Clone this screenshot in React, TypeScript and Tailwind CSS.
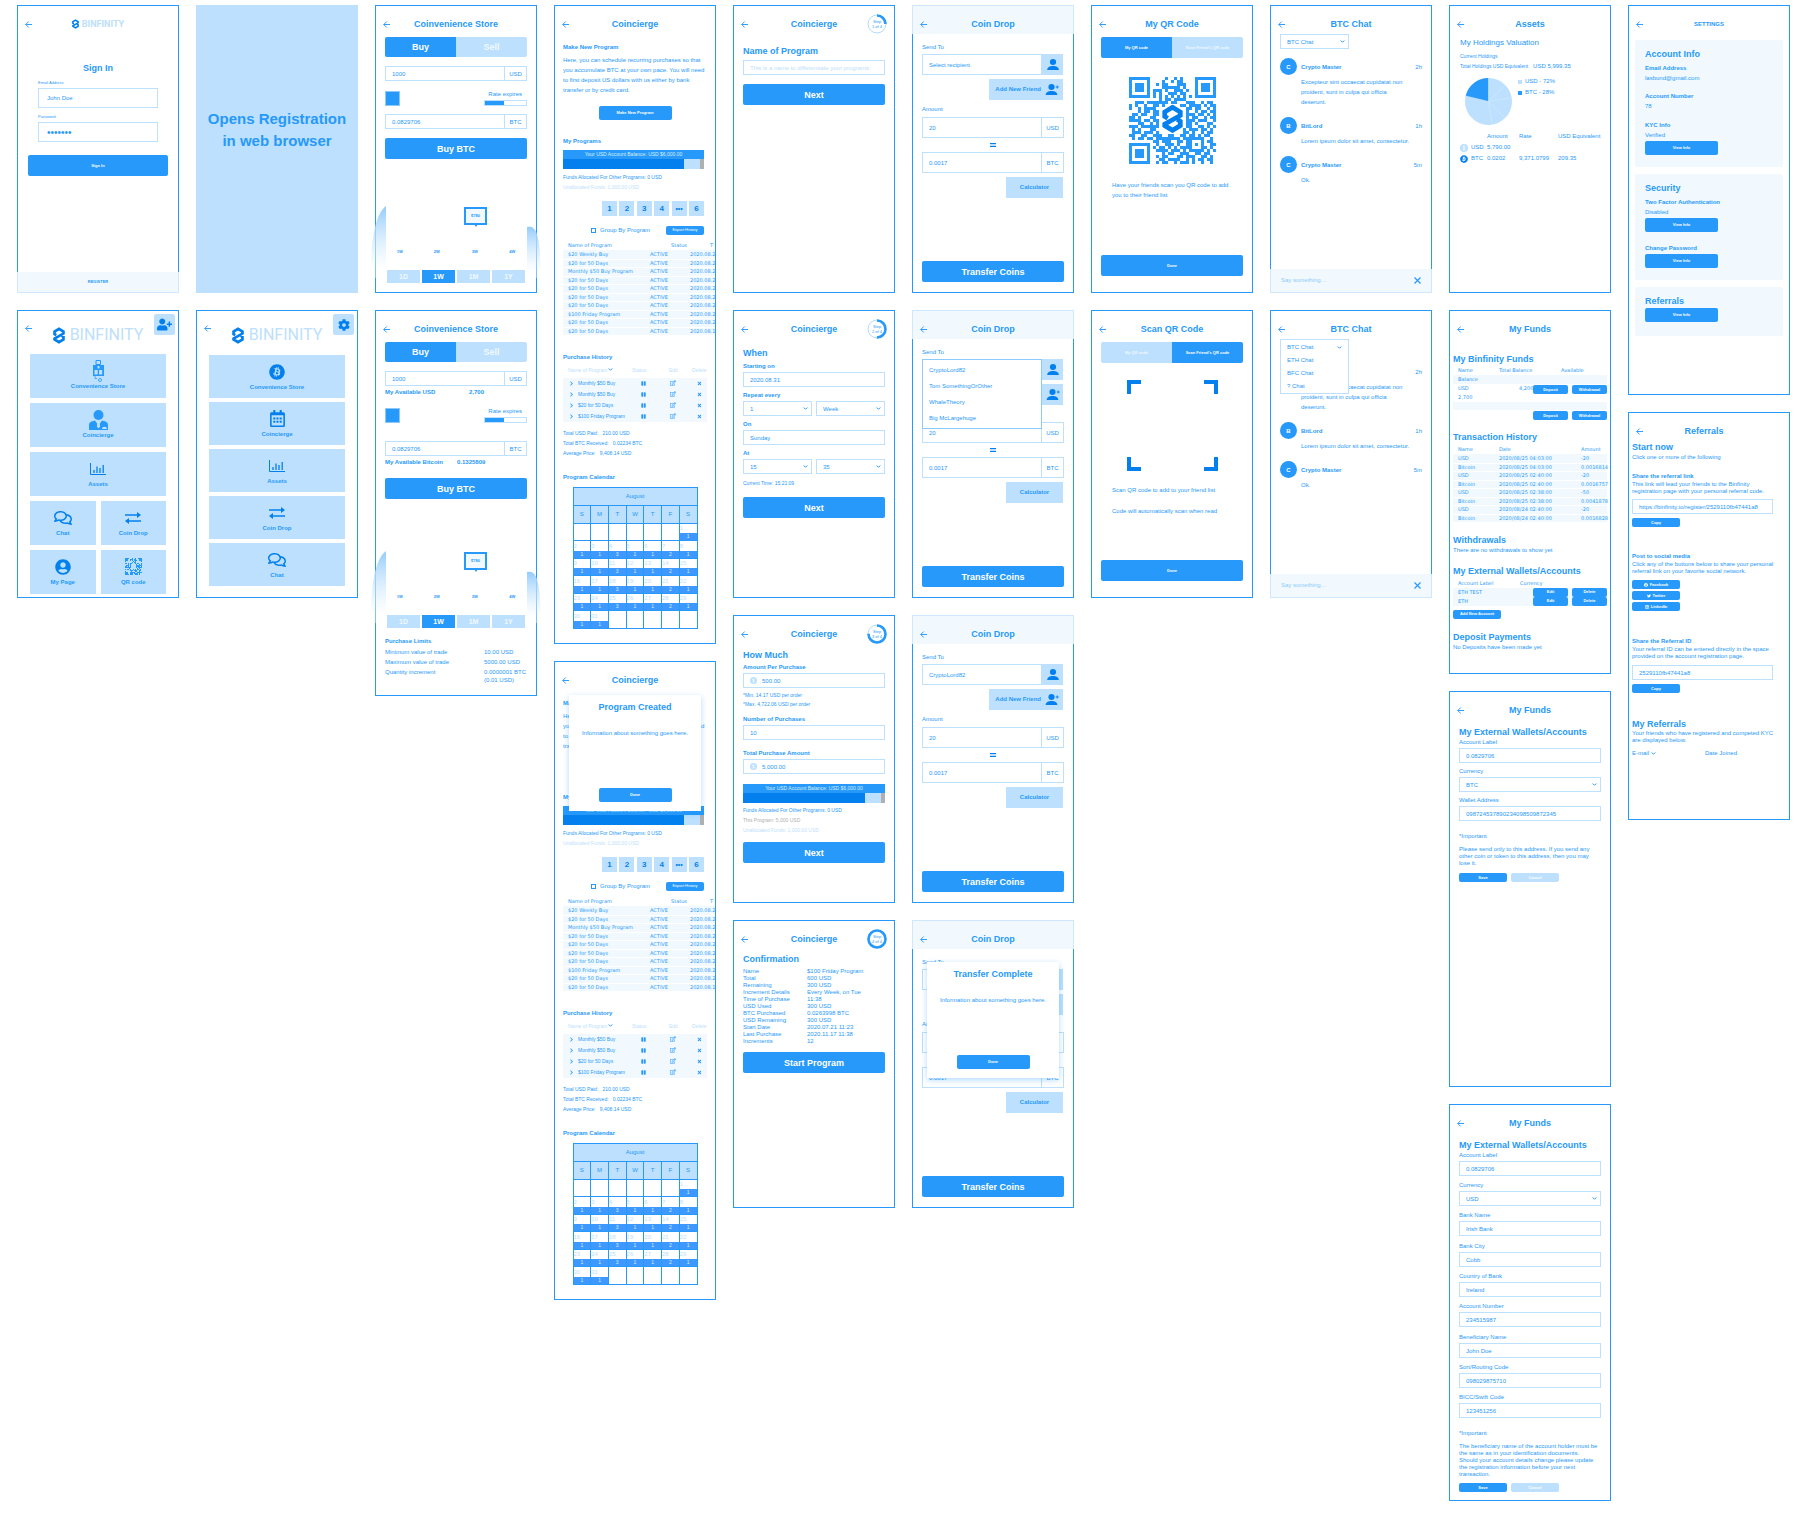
import React from "react";
import {
  FaBitcoin,
  FaChevronRight,
  FaCog,
  FaFacebook,
  FaLinkedin,
  FaPause,
  FaRegCalendarAlt,
  FaRegComments,
  FaRegEdit,
  FaTimes,
  FaTwitter,
  FaUserCircle,
  FaUserPlus,
} from "react-icons/fa";

type Kids = { children?: React.ReactNode; className?: string };

/* ---------- text ---------- */

const H = ({ children, className = "" }: Kids) => (
  <h2 className={`whitespace-nowrap text-[9px] font-bold leading-[10px] ${className}`}>{children}</h2>
);
const B = ({ children, className = "" }: Kids) => (
  <h3 className={`whitespace-nowrap text-[6px] font-bold leading-[8px] ${className}`}>{children}</h3>
);
const P = ({ children, className = "" }: Kids) => (
  <p className={`whitespace-nowrap text-[6px] leading-[8px] ${className}`}>{children}</p>
);
const Para = ({ children, className = "" }: Kids) => (
  <p className={`whitespace-pre text-[6px] leading-[7px] ${className}`}>{children}</p>
);
const S = ({ children, className = "" }: Kids) => (
  <p className={`whitespace-nowrap text-[5px] leading-[8px] ${className}`}>{children}</p>
);

/* ---------- controls ---------- */

const BigButton = ({ children, className = "" }: Kids) => (
  <button className={`h-[21px] w-full shrink-0 rounded-[2px] bg-[#2699fb] text-[9px] font-bold leading-[10px] text-white ${className}`}>
    {children}
  </button>
);
const SmallButton = ({ children, className = "" }: Kids) => (
  <button className={`block h-[14px] w-[73px] rounded-[2px] bg-[#2699fb] text-[4px] font-bold leading-[6px] text-white ${className}`}>
    {children}
  </button>
);
const TinyButton = ({ children, className = "" }: Kids) => (
  <button
    className={`flex h-[9px] items-center justify-center gap-[2px] whitespace-nowrap rounded-[2px] bg-[#2699fb] text-[4px] font-bold leading-[6px] text-white ${className}`}
  >
    {children}
  </button>
);

const Chevron = ({ className = "" }: { className?: string }) => (
  <svg viewBox="0 0 10 6" className={`h-[3px] w-[5px] shrink-0 ${className}`} fill="none" stroke="#2699fb" strokeWidth="2">
    <path d="M1.500 1L5 4.500 8.500 1" />
  </svg>
);

const Back = () => (
  <svg viewBox="0 0 14 14" className="size-[7px]" fill="none" stroke="#2699fb" strokeWidth="1.900">
    <path d="M14 7H1.500M7.500 1l-6 6 6 6" />
  </svg>
);

const fieldBox = "w-full min-w-0 border border-[#bce0fd] bg-white px-[6px] text-[6px] leading-[8px] text-[#2699fb] outline-none placeholder:text-[#bce0fd]";

type FieldProps = {
  label?: string;
  name?: string;
  value?: string;
  placeholder?: string;
  bold?: boolean;
  coin?: boolean;
  className?: string;
};

const Field = ({ label, name, value, placeholder, bold, coin, className = "" }: FieldProps) => (
  <label className={`block ${className}`}>
    {label && <span className={`mb-[2px] block whitespace-nowrap text-[6px] leading-[8px] ${bold ? "font-bold" : ""}`}>{label}</span>}
    <span className="relative flex">
      {coin && <Coin className="absolute left-[7px] top-[4px] size-[7px]" />}
      <input className={`${fieldBox} h-[15px] ${coin ? "pl-[18px]" : ""}`} defaultValue={value} placeholder={placeholder} aria-label={label ? undefined : name} />
    </span>
  </label>
);

const Select = ({ label, name, value, className = "" }: FieldProps) => (
  <label className={`block ${className}`}>
    {label && <span className="mb-[2px] block whitespace-nowrap text-[6px] leading-[8px]">{label}</span>}
    <span className="relative flex items-center">
      <select className={`${fieldBox} h-[15px] appearance-none`} aria-label={label ? undefined : name}>
        <option>{value}</option>
      </select>
      <Chevron className="absolute right-[4px]" />
    </span>
  </label>
);

const UnitField = ({ value, unit, tall }: { value: string; unit: string; tall?: boolean }) => (
  <div className={`flex ${tall ? "h-[21px]" : "h-[15px]"}`}>
    <input className={fieldBox} defaultValue={value} aria-label={`Amount in ${unit}`} />
    <span className="flex w-[22px] shrink-0 items-center justify-center border border-l-0 border-[#bce0fd] text-[6px] leading-[8px]">{unit}</span>
  </div>
);

/* ---------- drawings ---------- */

const Coin = ({ className = "" }: { className?: string }) => (
  <svg viewBox="0 0 16 16" className={className}>
    <circle cx="8" cy="8" r="8" fill="#bce0fd" />
    <path d="M10.500 5.600C10 4.700 9.200 4.300 8 4.300c-1.500 0-2.500.7-2.500 1.800 0 2.600 5.200 1.100 5.200 3.800 0 1.200-1.100 1.900-2.700 1.900-1.400 0-2.300-.5-2.800-1.500M8 2.800v10.400" fill="none" stroke="#fff" strokeWidth="1.100" />
  </svg>
);

const MARK_PATH = "M17 40.500L8 35V22L31 8l23 14v10L8 57.500V62l23 14 23-14V49l-9-5.500";

const Mark = ({ className = "" }: { className?: string }) => (
  <svg viewBox="0 0 62 84" className={className} fill="none" stroke="#0480ee" strokeWidth="14">
    <path d={MARK_PATH} />
  </svg>
);

const Logo = ({ large }: { large?: boolean }) => (
  <div className={`flex items-center justify-center ${large ? "gap-[5px]" : "gap-[3px]"}`}>
    <Mark className={large ? "h-[17px] w-[12px]" : "h-[10px] w-[7px]"} />
    <span className={`font-[Roboto,sans-serif] text-[#bce0fd] ${large ? "text-[16px] leading-[18px]" : "text-[9px] leading-[10px]"}`}>BINFINITY</span>
  </div>
);

const Bars = () => (
  <svg viewBox="0 0 16 12" className="h-[12px] w-[16px]" stroke="#0480ee" fill="none">
    <path d="M.5 0v11.500H16" />
    <path d="M4 10V7M7 10V3.500M10 10V5M13.200 10V2" strokeWidth="1.300" />
  </svg>
);

const Swap = () => (
  <svg viewBox="0 0 16 12" className="h-[12px] w-[16px]" fill="#0480ee">
    <path d="M0 2.200h12V0l4 3-4 3V3.800H0zM16 8.200H4V6L0 9l4 3V9.800h12z" />
  </svg>
);

const Register = () => (
  <svg viewBox="0 0 12 22" className="h-[22px] w-[12px]" fill="#2699fb">
    <path d="M4 .5h4.500v4H4z" fill="none" stroke="#2699fb" />
    <path d="M1 5h11v11H1z" />
    <path d="M2.500 10h3.200v4.500H2.500zM7 10h3.200v4.500H7zM5.500 6h2v2.500h-2z" fill="#bce0fd" />
    <path d="M3 16v2.500h2M6.500 20a1.500 1.500 0 103 0 1.500 1.500 0 10-3 0" fill="none" stroke="#2699fb" strokeWidth=".8" />
  </svg>
);

const Butler = () => (
  <svg viewBox="0 0 19 20" className="h-[20px] w-[19px]" fill="#2699fb">
    <circle cx="9.500" cy="5" r="5" />
    <path d="M0 20v-5c0-2.500 1.500-3.500 6-4.500l3.500 5 3.500-5c4.500 1 6 2 6 4.500v5z" />
    <path d="M8.500 11.500h2l.6 5-1.600 2-1.600-2zM13 19c0-3 5-3 5 0z" fill="#bce0fd" />
  </svg>
);

const Person = () => (
  <svg viewBox="0 0 12 11" className="h-[11px] w-[12px] shrink-0" fill="#0480ee">
    <ellipse cx="6" cy="3" rx="3.100" ry="3" />
    <path d="M.2 11c0-2.600 2.500-4 5.800-4s5.800 1.400 5.800 4z" />
  </svg>
);

const PersonAdd = () => (
  <svg viewBox="0 0 14 11" className="h-[11px] w-[14px] shrink-0" fill="#0480ee">
    <ellipse cx="6.500" cy="3" rx="3.100" ry="3" />
    <path d="M.7 11c0-2.600 2.500-4 5.800-4s5.800 1.400 5.800 4z" />
    <path d="M12.200 1.500v3M10.700 3h3" stroke="#0480ee" strokeWidth=".9" />
  </svg>
);

const Cross = () => (
  <svg viewBox="0 0 7 7" className="size-[7px]" stroke="#2699fb" strokeWidth="1.200">
    <path d="M.5.5l6 6M6.500.5l-6 6" />
  </svg>
);

const QR_ROWS = [
  "11111110000010010100001111111",
  "10000010000100101100001000001",
  "10111010010110001110001011101",
  "10111010000111111010001011101",
  "10111010111010011101001011101",
  "10000010101001110110001000001",
  "11111110101010101010101111111",
  "00000000001011011110000000000",
  "00111011111110110001110010110",
  "10100100110100000110111101011",
  "10010111100000000001101100101",
  "00010110110000000001001011011",
  "01101100110000000001110110101",
  "11010001100000000001011001011",
  "11110110110000000001110111001",
  "00011001010000000001101000110",
  "11101111110000000001100110101",
  "01010001100000000010111011010",
  "01110111010000000011010010110",
  "11001100111001100110110101100",
  "01011011011111111011111110010",
  "00000000110111001101100010110",
  "11111110010011101001101010011",
  "10000010101101010111100011010",
  "10111010011110111010111110101",
  "10111010000101100111001101100",
  "10111010010110001101110011010",
  "10000010001101111001010110110",
  "11111110010110010111010010010",
];

const Qr = ({ className = "", mark }: { className?: string; mark?: boolean }) => (
  <svg viewBox="0 0 29 29" className={className} shapeRendering="crispEdges">
    {QR_ROWS.map((row, y) =>
      row.split("").map((c, x) => (c === "1" ? <rect key={`${x}-${y}`} x={x} y={y} width="1" height="1" fill="#2699fb" /> : null)),
    )}
    {mark && (
      <svg x="11" y="9.200" width="7" height="9.500" viewBox="0 0 62 84" shapeRendering="auto" fill="none" stroke="#0480ee" strokeWidth="14">
        <path d={MARK_PATH} />
      </svg>
    )}
  </svg>
);

const StepRing = ({ step }: { step: number }) => {
  const length = 2 * Math.PI * 8.5;
  return (
    <div className="relative size-[20px]">
      <svg viewBox="0 0 20 20" className="absolute inset-0 size-[20px] -rotate-90" fill="none">
        <circle cx="10" cy="10" r="9" stroke="#7cc2fc" strokeWidth=".6" />
        <circle cx="10" cy="10" r="8.500" stroke="#2699fb" strokeWidth="2.600" strokeDasharray={`${(length * step) / 4} ${length}`} />
      </svg>
      <p className="relative pt-[5px] text-center text-[4px] leading-[5px]">
        Step
        <br />
        {step} of 4
      </p>
    </div>
  );
};

/* ---------- screens ---------- */

const Header = ({ title, right, tinted, small, className = "" }: { title: React.ReactNode; right?: React.ReactNode; tinted?: boolean; small?: boolean; className?: string }) => (
  <header
    className={`grid shrink-0 grid-cols-[20px_1fr_20px] items-center px-[7px] ${
      tinted ? "-mx-px -mt-px h-[29px] border border-b-0 border-[#cfe8fd] bg-[#f1f9ff] pt-[8px]" : "h-[28px] pt-[8px]"
    } ${className}`}
  >
    <button aria-label="Back">
      <Back />
    </button>
    <h1 className={`whitespace-nowrap text-center font-bold leading-[12px] ${small ? "text-[6px]" : "text-[9px]"}`}>{title}</h1>
    <div>{right}</div>
  </header>
);

const Card = ({ children, className = "min-h-[288px]" }: Kids) => (
  <section className={`relative flex w-full flex-col border border-[#2699fb] bg-white ${className}`}>{children}</section>
);
const Body = ({ children, className = "px-[9px]" }: Kids) => <div className={`flex grow flex-col ${className}`}>{children}</div>;

const SignIn = () => (
  <Card>
    <Header title={<Logo />} />
    <Body className="px-[20px]">
      <H className="mt-[29px] text-center">Sign In</H>
      <label className="mt-[7px] block">
        <span className="block text-[4px] leading-[6px]">Email Address</span>
        <input className={`${fieldBox} mt-[2px] block h-[20px] pl-[8px]`} defaultValue="John Doe" />
      </label>
      <label className="mt-[6px] block">
        <span className="block text-[4px] leading-[6px]">Password</span>
        <input
          type="password"
          className="mt-[2px] block h-[20px] w-full min-w-0 border border-[#bce0fd] bg-white pl-[8px] text-[10px] leading-[12px] text-[#2699fb] outline-none"
          defaultValue="1234567"
        />
      </label>
      <button className="-mx-[10px] mt-[13px] h-[21px] rounded-[2px] bg-[#2699fb] text-[4px] font-bold text-white">Sign In</button>
    </Body>
    <a href="#register" className="-mx-px -mb-px flex h-[21px] items-center justify-center border border-t-0 border-[#cfe8fd] bg-[#f1f9ff] text-[4px] font-bold">
      REGISTER
    </a>
  </Card>
);

const Registration = () => (
  <section className="flex min-h-[288px] w-full flex-col items-center bg-[#bce0fd] pt-[103px] text-center text-[15px] font-bold leading-[22px]">
    <p className="whitespace-nowrap">
      Opens Registration
      <br />
      in web browser
    </p>
  </section>
);

const Tile = ({ icon, label, className = "h-[44px]" }: { icon: React.ReactNode; label: string; className?: string }) => (
  <button className={`flex w-full flex-col items-center bg-[#bce0fd] text-[#0480ee] ${className}`}>
    <span className="mt-[5px] flex h-[23px] items-center justify-center">{icon}</span>
    <span className="whitespace-nowrap text-[6px] font-bold leading-[8px] text-[#2699fb]">{label}</span>
  </button>
);

const HomeTop = ({ icon, label }: { icon: React.ReactNode; label: string }) => (
  <div className="relative flex h-[43px] flex-col">
    <button aria-label="Back" className="absolute left-[7px] top-[14px]">
      <Back />
    </button>
    <div className="pt-[15px]">
      <Logo large />
    </div>
    <button aria-label={label} className="absolute right-[3px] top-[3px] flex size-[21px] items-center justify-center rounded-[2px] bg-[#bce0fd] text-[#0480ee]">
      {icon}
    </button>
  </div>
);

const HomeGrid = () => (
  <Card>
    <HomeTop icon={<FaUserPlus className="size-[15px]" />} label="Add friend" />
    <Body className="gap-[5px] px-[12px]">
      <Tile icon={<Register />} label="Convenience Store" />
      <Tile icon={<Butler />} label="Coincierge" />
      <Tile icon={<Bars />} label="Assets" />
      <div className="grid grid-cols-2 gap-[5px]">
        <Tile icon={<FaRegComments className="size-[18px]" />} label="Chat" />
        <Tile icon={<Swap />} label="Coin Drop" />
        <Tile icon={<FaUserCircle className="size-[16px]" />} label="My Page" />
        <Tile icon={<Qr className="size-[17px]" />} label="QR code" />
      </div>
    </Body>
  </Card>
);

const HomeList = () => (
  <Card>
    <HomeTop icon={<FaCog className="size-[12px]" />} label="Settings" />
    <Body className="gap-[4px] px-[12px] pt-px">
      <Tile className="h-[43px]" icon={<FaBitcoin className="size-[16px]" />} label="Convenience Store" />
      <Tile className="h-[43px]" icon={<FaRegCalendarAlt className="size-[17px]" />} label="Coincierge" />
      <Tile className="h-[43px]" icon={<Bars />} label="Assets" />
      <Tile className="h-[43px]" icon={<Swap />} label="Coin Drop" />
      <Tile className="h-[43px]" icon={<FaRegComments className="size-[18px]" />} label="Chat" />
    </Body>
  </Card>
);

const Store = ({ detailed }: { detailed?: boolean }) => (
  <Card className={detailed ? "min-h-[386px]" : "min-h-[288px]"}>
    <Header title="Coinvenience Store" />
    <Body>
      <div className="mt-[3px] flex h-[20px] text-[9px] font-bold leading-[10px]">
        <button className="flex-1 rounded-l-[2px] bg-[#2699fb] text-white">Buy</button>
        <button className="flex-1 rounded-r-[2px] bg-[#bce0fd] text-[#f1f9ff]">Sell</button>
      </div>
      <div className="mt-[9px]">
        <UnitField value="1000" unit="USD" />
      </div>
      {detailed && (
        <div className="mt-[2px] grid grid-cols-[84px_1fr]">
          <B>My Available USD</B>
          <B>2,700</B>
        </div>
      )}
      <div className={`flex items-end justify-between ${detailed ? "mt-[11px]" : "mt-[9px]"}`}>
        <span className="size-[15px] border border-[#8ccafc] bg-[#2699fb]" />
        <div className="w-[43px]">
          <P className="mb-[2px] mr-[5px] text-right">Rate expires</P>
          <div className="h-[6px] border border-[#bce0fd]">
            <div className="h-[4px] w-[19px] bg-[#2699fb]" />
          </div>
        </div>
      </div>
      <div className={detailed ? "mt-[18px]" : "mt-[8px]"}>
        <UnitField value="0.0829706" unit="BTC" />
      </div>
      {detailed && (
        <div className="mt-[2px] grid grid-cols-[72px_1fr]">
          <B>My Available Bitcoin</B>
          <B>0.1325809</B>
        </div>
      )}
      <BigButton className={detailed ? "mt-[12px]" : "mt-[9px]"}>Buy BTC</BigButton>
      <div className={`relative flex flex-col justify-end ${detailed ? "h-[116px]" : "h-[111px]"}`}>
        <svg viewBox="0 0 171 72" className="absolute bottom-[-8px] left-[-15px] h-[72px] w-[171px]" aria-hidden="true">
          <defs>
            <linearGradient id={detailed ? "fadeB" : "fadeA"} x1="0" y1="0" x2="0" y2="1">
              <stop offset="0" stopColor="#93ccfd" />
              <stop offset=".9" stopColor="#fff" stopOpacity=".4" />
            </linearGradient>
          </defs>
          <g fill={detailed ? "url(#fadeB)" : "url(#fadeA)"}>
            <path d="M16 0C5 8 1 34 0 72h16z" />
            <path d="M157 21c10-2 13 8 14 51h-14z" />
          </g>
        </svg>
        <div className="absolute bottom-[45px] left-[79px] flex h-[18px] w-[23px] items-center justify-center border-2 border-[#2699fb] bg-[#f1f9ff] text-[4px] font-bold">
          $780
          <svg viewBox="0 0 4 3" className="absolute bottom-[-4px] left-[8px] h-[3px] w-[4px]" fill="#2699fb">
            <path d="M0 0h4L2 3z" />
          </svg>
        </div>
        <div className="mb-[15px] grid grid-cols-4 text-center text-[4px] font-bold leading-[6px]">
          <span className="pr-[6px]">1W</span>
          <span className="pr-[3px]">2W</span>
          <span className="pl-[2px]">3W</span>
          <span className="pl-[6px]">4W</span>
        </div>
      </div>
      <div className="mx-[2px] grid grid-cols-4 gap-[2px] text-[7px] font-bold leading-[8px] text-[#f1f9ff]">
        <button className="h-[13px] bg-[#bce0fd]">1D</button>
        <button className="h-[13px] bg-[#2699fb] text-white">1W</button>
        <button className="h-[13px] bg-[#bce0fd]">1M</button>
        <button className="h-[13px] bg-[#bce0fd]">1Y</button>
      </div>
      {detailed && (
        <>
          <B className="mt-[9px]">Purchase Limits</B>
          <dl className="mt-[2px] grid grid-cols-[99px_1fr] whitespace-nowrap text-[6px] leading-[10px]">
            <dt>Minimum value of trade</dt>
            <dd>10.00 USD</dd>
            <dt>Maximum value of trade</dt>
            <dd>5000.00 USD</dd>
            <dt>Quantity increment</dt>
            <dd className="pt-px leading-[8px]">
              0.0000001 BTC
              <br />
              (0.01 USD)
            </dd>
          </dl>
        </>
      )}
    </Body>
  </Card>
);

const Balance = () => (
  <div>
    <p className="h-[9px] whitespace-nowrap bg-[#2699fb] text-center text-[5px] leading-[9px] text-[#d9eefe]">Your USD Account Balance: USD $6,000.00</p>
    <div className="flex h-[10px] bg-[#bce0fd]">
      <div className="w-[86%] bg-[#0480ee]" />
      <div className="ml-auto w-[4px] bg-[#b0b0b0]" />
    </div>
  </div>
);

const PROGRAMS = [
  ["$20 Weekly Buy", "2020.08.2"],
  ["$20 for 50 Days", "2020.08.2"],
  ["Monthly $50 Buy Program", "2020.08.2"],
  ["$20 for 50 Days", "2020.08.2"],
  ["$20 for 50 Days", "2020.08.2"],
  ["$20 for 50 Days", "2020.08.2"],
  ["$20 for 50 Days", "2020.08.2"],
  ["$100 Friday Program", "2020.08.2"],
  ["$20 for 50 Days", "2020.08.2"],
  ["$20 for 50 Days", "2020.08.1"],
];

const COUNTS = ["1", "1", "3", "1", "1", "2", "1"];

const Calendar = () => {
  const weeks = Array.from({ length: 6 }, (_, w) => Array.from({ length: 7 }, (_, d) => w * 7 + d - 5));
  return (
    <table className="mx-auto mt-[6px] h-[142px] w-[125px] table-fixed border-collapse border border-[#2699fb] text-center text-[6px] leading-[8px]">
      <thead>
        <tr>
          <th colSpan={7} className="h-[18px] border border-[#2699fb] bg-[#bce0fd] font-normal">
            August
          </th>
        </tr>
        <tr>
          {["S", "M", "T", "W", "T", "F", "S"].map((d, i) => (
            <th key={i} className="h-[18px] border border-[#2699fb] bg-[#bce0fd] font-normal">
              {d}
            </th>
          ))}
        </tr>
      </thead>
      <tbody>
        {weeks.map((week, w) => (
          <tr key={w}>
            {week.map((day, d) => (
              <td key={d} className="border border-[#2699fb] p-0 align-bottom">
                {day > 0 && day < 32 && (
                  <>
                    <span className="block text-left leading-[9px] text-[#bce0fd]">{day}</span>
                    <span className="block bg-[#3d98ff] text-[5px] leading-[7px] text-[#d9eefe]">{w === 0 ? "1" : COUNTS[d]}</span>
                  </>
                )}
              </td>
            ))}
          </tr>
        ))}
      </tbody>
    </table>
  );
};

const Modal = ({ title, className = "" }: { title: string; className?: string }) => (
  <div role="dialog" aria-label={title} className={`absolute inset-x-[14px] flex h-[116px] flex-col items-center bg-white shadow-[0_2px_6px_rgba(38,153,251,0.35)] ${className}`}>
    <H className="mt-[7px]">{title}</H>
    <P className="mt-[17px]">Information about something goes here.</P>
    <SmallButton className="mb-[9px] mt-auto">Done</SmallButton>
  </div>
);

const Programs = ({ modal }: { modal?: boolean }) => (
  <Card className="min-h-[639px] overflow-hidden">
    <Header title="Coincierge" />
    <Body className="px-[8px] pb-[12px]">
      <B className="mt-[9px]">Make New Program</B>
      <p className="mt-[4px] whitespace-pre text-[6px] leading-[10px]">
        {"Here, you can schedule recurring purchases so that\nyou accumulate BTC at your own pace. You will need\nto first deposit US dollars with us either by bank\ntransfer or by credit card."}
      </p>
      <SmallButton className="mx-auto mt-[11px]">Make New Program</SmallButton>
      <B className="mt-[17px]">My Programs</B>
      <div className="mr-[3px] mt-[5px]">
        <Balance />
        <p className="mt-[3px] whitespace-nowrap text-[5px] leading-[10px]">
          Funds Allocated For Other Programs: 0 USD
          <br />
          <span className="text-[#bce0fd]">Unallocated Funds: 1,000.00 USD</span>
        </p>
        <nav className="ml-auto mt-[9px] flex w-[102px] justify-between">
          {["1", "2", "3", "4", "•••", "6"].map((p) => (
            <button key={p} className={`size-[15px] bg-[#bce0fd] font-bold leading-[15px] text-[#0480ee] ${p === "•••" ? "text-[7px]" : "text-[8px]"}`}>
              {p}
            </button>
          ))}
        </nav>
        <div className="mt-[9px] flex h-[10px] items-center justify-end">
          <label className="flex items-center gap-[4px] whitespace-nowrap text-[6px] leading-[8px]">
            <input type="checkbox" className="size-[5px] appearance-none border border-[#2699fb]" />
            Group By Program
          </label>
          <TinyButton className="ml-[16px] w-[38px] font-normal">Export History</TinyButton>
        </div>
      </div>
      <table className="mr-[-9px] mt-[5px] table-fixed whitespace-nowrap text-left font-['DejaVu_Sans',sans-serif] text-[5px] leading-[7px]">
        <thead>
          <tr className="h-[10px]">
            <th className="w-[87px] p-0 pl-[5px] font-normal">Name of Program</th>
            <th className="w-[40px] p-0 pl-[21px] font-normal">Status</th>
            <th className="p-0 pl-[20px] font-normal">T</th>
          </tr>
        </thead>
        <tbody>
          {PROGRAMS.map(([name, date], i) => (
            <tr key={i} className="border-b border-white bg-[#f1f9ff] odd:h-[9px] even:h-[8px]">
              <td className="p-0 pl-[5px]">{name}</td>
              <td className="p-0">ACTIVE</td>
              <td className="p-0">{date}</td>
            </tr>
          ))}
        </tbody>
      </table>
      <B className="mt-[17px]">Purchase History</B>
      <table className="mt-[4px] w-full table-fixed whitespace-nowrap text-left text-[5px] leading-[8px]">
        <thead className="text-[#bce0fd]">
          <tr className="h-[13px] align-top">
            <th className="w-[69px] p-0 pl-[5px] pt-px font-normal">
              <span className="flex items-center gap-[1px]">
                Name of Program <Chevron />
              </span>
            </th>
            <th className="w-[37px] p-0 pt-px font-normal">Status</th>
            <th className="w-[23px] p-0 pt-px font-normal">Edit</th>
            <th className="p-0 pt-px font-normal">Delete</th>
          </tr>
        </thead>
        <tbody>
          {["Monthly $50 Buy", "Monthly $50 Buy", "$20 for 50 Days", "$100 Friday Program"].map((name, i) => (
            <tr key={i} className="h-[11px] bg-[#f1f9ff]">
              <td className="p-0 pl-[6px]">
                <span className="flex items-center gap-[4px]">
                  <FaChevronRight className="size-[5px]" />
                  {name}
                </span>
              </td>
              <td className="p-0 pl-[9px]">
                <button aria-label="Pause" className="block">
                  <FaPause className="size-[5px]" />
                </button>
              </td>
              <td className="p-0 pl-[1px]">
                <button aria-label="Edit" className="block">
                  <FaRegEdit className="size-[6px]" />
                </button>
              </td>
              <td className="p-0 pl-[5px]">
                <button aria-label="Delete" className="block">
                  <FaTimes className="size-[5px]" />
                </button>
              </td>
            </tr>
          ))}
        </tbody>
      </table>
      <p className="mt-[6px] whitespace-pre text-[5px] leading-[10px]">{"Total USD Paid:   210.00 USD\nTotal BTC Received:   0.02234 BTC\nAverage Price:   9,408.14 USD"}</p>
      <B className="mt-[15px]">Program Calendar</B>
      <Calendar />
    </Body>
    {modal && <Modal title="Program Created" className="top-[33px]" />}
  </Card>
);

const NameStep = () => (
  <Card>
    <Header title="Coincierge" right={<StepRing step={1} />} />
    <Body>
      <H className="mt-[12px]">Name of Program</H>
      <Field className="mt-[4px]" name="Name of Program" placeholder="This is a name to differentiate your programs." />
      <BigButton className="mt-[9px]">Next</BigButton>
    </Body>
  </Card>
);

const WhenStep = () => (
  <Card>
    <Header title="Coincierge" right={<StepRing step={2} />} />
    <Body>
      <H className="mt-[9px]">When</H>
      <Field bold className="mt-[4px]" label="Starting on" value="2020.08.31" />
      <B className="mt-[4px]">Repeat every</B>
      <div className="mt-[2px] grid grid-cols-2 gap-[4px]">
        <Select name="Repeat count" value="1" />
        <Select name="Repeat unit" value="Week" />
      </div>
      <Field bold className="mt-[4px]" label="On" value="Sunday" />
      <B className="mt-[4px]">At</B>
      <div className="mt-[2px] grid grid-cols-2 gap-[4px]">
        <Select name="Hour" value="15" />
        <Select name="Minute" value="35" />
      </div>
      <S className="mt-[5px]">Current Time: 15:21:09</S>
      <BigButton className="mt-[10px]">Next</BigButton>
    </Body>
  </Card>
);

const HowMuchStep = () => (
  <Card>
    <Header title="Coincierge" right={<StepRing step={3} />} />
    <Body>
      <H className="mt-[6px]">How Much</H>
      <Field bold coin className="mt-[3px]" label="Amount Per Purchase" value="500.00" />
      <p className="mt-[3px] whitespace-nowrap text-[5px] leading-[9px]">
        *Min. 14.17 USD per order
        <br />
        *Max. 4,722.06 USD per order
      </p>
      <Field bold className="mt-[6px]" label="Number of Purchases" value="10" />
      <Field bold coin className="mb-[10px] mt-[9px]" label="Total Purchase Amount" value="5,000.00" />
      <Balance />
      <p className="mt-[2px] whitespace-nowrap text-[5px] leading-[10px]">
        Funds Allocated For Other Programs: 0 USD
        <br />
        <span className="text-[#b0b0b0]">This Program: 5,000 USD</span>
        <br />
        <span className="text-[#bce0fd]">Unallocated Funds: 1,000.00 USD</span>
      </p>
      <BigButton className="mt-[7px]">Next</BigButton>
    </Body>
  </Card>
);

const CONFIRM = [
  ["Name", "$100 Friday Program"],
  ["Total", "600 USD"],
  ["Remaining", "300 USD"],
  ["Increment Details", "Every Week, on Tue"],
  ["Time of Purchase", "11:38"],
  ["USD Used", "300 USD"],
  ["BTC Purchased", "0.0263998 BTC"],
  ["USD Remaining", "300 USD"],
  ["Start Date", "2020.07.21 11:23"],
  ["Last Purchase", "2020.11.17 11:38"],
  ["Increments", "12"],
];

const ConfirmStep = () => (
  <Card>
    <Header title="Coincierge" right={<StepRing step={4} />} />
    <Body>
      <H className="mt-[5px]">Confirmation</H>
      <dl className="mt-[4px] grid grid-cols-[64px_1fr] whitespace-nowrap text-[6px] leading-[7px]">
        {CONFIRM.map(([k, v]) => (
          <React.Fragment key={k}>
            <dt>{k}</dt>
            <dd>{v}</dd>
          </React.Fragment>
        ))}
      </dl>
      <BigButton className="mt-[7px]">Start Program</BigButton>
    </Body>
  </Card>
);

const CoinDrop = ({ recipient, list, modal }: { recipient: string; list?: boolean; modal?: boolean }) => (
  <Card>
    <Header tinted title="Coin Drop" />
    <Body className="px-[9px] pb-[10px]">
      <label className="mt-[9px] block">
        <span className="block text-[6px] leading-[8px]">Send To</span>
        <span className="mr-px mt-[3px] flex h-[21px]">
          <input className={fieldBox} defaultValue={recipient} />
          <span className="flex w-[21px] shrink-0 items-center justify-center bg-[#bce0fd]">
            <Person />
          </span>
        </span>
      </label>
      {list ? (
        <button aria-label="Add New Friend" className="ml-auto mr-px mt-[4px] flex h-[21px] w-[21px] items-center justify-center bg-[#bce0fd]">
          <PersonAdd />
        </button>
      ) : (
        <button className="ml-auto mr-px mt-[4px] flex h-[21px] w-[74px] items-center justify-end gap-[4px] bg-[#bce0fd] pr-[4px] text-[6px] font-bold">
          <span className="whitespace-nowrap">Add New Friend</span>
          <PersonAdd />
        </button>
      )}
      <P className="mb-[4px] mt-[5px]">Amount</P>
      <UnitField tall value="20" unit="USD" />
      <svg viewBox="0 0 6 4" className="mx-auto my-[5px] h-[4px] w-[6px] shrink-0" fill="#0480ee">
        <path d="M0 0h6v1.300H0zM0 2.700h6V4H0z" />
      </svg>
      <UnitField tall value="0.0017" unit="BTC" />
      <button className="ml-auto mr-px mt-[4px] h-[21px] w-[57px] bg-[#bce0fd] text-[6px] font-bold">Calculator</button>
      <BigButton className="mt-auto">Transfer Coins</BigButton>
    </Body>
    {list && (
      <ul className="absolute left-[9px] right-[31px] top-[48px] h-[70px] border border-[#8ccafc] bg-white pl-[6px] pt-[2px] text-[6px] leading-[16px]">
        <li>CryptoLord82</li>
        <li>Tom SomethingOrOther</li>
        <li>WhaleTheory</li>
        <li>Big McLargehuge</li>
      </ul>
    )}
    {modal && <Modal title="Transfer Complete" className="top-[41px]" />}
  </Card>
);

const QrTabs = ({ scan }: { scan?: boolean }) => (
  <div className="mt-[3px] flex h-[21px] text-[4px] font-bold leading-[6px]">
    <button className={`flex-1 rounded-l-[2px] ${scan ? "bg-[#bce0fd] text-[#f1f9ff]" : "bg-[#2699fb] text-white"}`}>My QR code</button>
    <button className={`flex-1 rounded-r-[2px] ${scan ? "bg-[#2699fb] text-white" : "bg-[#bce0fd] text-[#f1f9ff]"}`}>Scan Friend's QR code</button>
  </div>
);

const MyQr = () => (
  <Card>
    <Header title="My QR Code" />
    <Body className="px-[9px] pb-[16px]">
      <QrTabs />
      <Qr mark className="mx-auto mt-[19px] size-[87px]" />
      <p className="mt-[16px] whitespace-pre pl-[11px] text-[6px] leading-[10px]">{"Have your friends scan you QR code to add\nyou to their friend list"}</p>
      <button className="mt-auto h-[21px] rounded-[2px] bg-[#2699fb] text-[4px] font-bold text-white">Done</button>
    </Body>
  </Card>
);

const ScanQr = () => (
  <Card>
    <Header title="Scan QR Code" />
    <Body className="px-[9px] pb-[16px]">
      <QrTabs scan />
      <svg viewBox="0 0 91 91" className="mx-auto mt-[17px] size-[91px]" fill="none" stroke="#0480ee" strokeWidth="4">
        <path d="M2 14V2h12M77 2h12v12M89 77v12H77M14 89H2V77" />
      </svg>
      <P className="mt-[15px] pl-[11px]">Scan QR code to add to your friend list</P>
      <P className="mt-[13px] pl-[11px]">Code will automatically scan when read</P>
      <button className="mt-auto h-[21px] rounded-[2px] bg-[#2699fb] text-[4px] font-bold text-white">Done</button>
    </Body>
  </Card>
);

const Message = ({ name, time, text }: { name: string; time: string; text: string }) => (
  <article className="grid grid-cols-[17px_1fr] gap-x-[4px] text-[6px]">
    <span className="flex size-[17px] items-center justify-center rounded-full bg-[#2699fb] font-bold leading-[8px] text-white">{name[0]}</span>
    <header className="flex items-center justify-between leading-[8px]">
      <b>{name}</b>
      <time>{time}</time>
    </header>
    <p className="col-start-2 mt-[2px] whitespace-pre leading-[10px]">{text}</p>
  </article>
);

const Chat = ({ open }: { open?: boolean }) => (
  <Card>
    <Header title="BTC Chat" />
    <Body>
      {open ? <div className="h-[15px]" /> : <Select className="mr-[73px]" name="Chat room" value="BTC Chat" />}
      <div className="mt-[9px] grid gap-[10px]">
        <Message name="Crypto Master" time="2h" text={"Excepteur sint occaecat cupidatat non\nproident, sunt in culpa qui officia\ndeserunt."} />
        <Message name="BitLord" time="1h" text="Lorem ipsum dolor sit amet, consectetur." />
        <Message name="Crypto Master" time="5m" text="Ok." />
      </div>
    </Body>
    <footer className="-mx-px -mb-px flex h-[24px] items-center border border-t-0 border-[#cfe8fd] bg-[#f1f9ff] px-[10px]">
      <input aria-label="Message" placeholder="Say something…" className="min-w-0 flex-1 bg-transparent text-[6px] outline-none placeholder:text-[#8ccafc]" />
      <button aria-label="Clear">
        <Cross />
      </button>
    </footer>
    {open && (
      <ul className="absolute left-[9px] top-[28px] h-[55px] w-[69px] border border-[#bce0fd] bg-white px-[6px] pt-px text-[6px] leading-[13px]">
        <li className="flex items-center justify-between">
          BTC Chat
          <Chevron />
        </li>
        <li>ETH Chat</li>
        <li>BFC Chat</li>
        <li>? Chat</li>
      </ul>
    )}
  </Card>
);

const Assets = () => (
  <Card>
    <Header title="Assets" />
    <Body className="px-[10px]">
      <h2 className="mt-[4px] whitespace-nowrap text-[8px] leading-[10px]">My Holdings Valuation</h2>
      <S className="mt-[4px]">Current Holdings</S>
      <p className="mt-[2px] flex items-center gap-[5px] whitespace-nowrap text-[5px] leading-[8px]">
        Total Holdings USD Equivalent <span className="text-[6px]">USD 5,999.35</span>
      </p>
      <div className="mt-[8px] flex pl-[5px]">
        <svg viewBox="0 0 48 48" className="size-[47px]">
          <circle cx="24" cy="24" r="24" fill="#bce0fd" />
          <path d="M24 24L.7 18.400A24 24 0 0124 0z" fill="#2699fb" />
          <path d="M24 24L41 7M24 24l24-4M24 24l17 17M24 24l4 24M24 24V0M24 24L.7 18.400" stroke="#d3eafe" strokeWidth=".6" />
        </svg>
        <ul className="-mt-[2px] ml-[6px] text-[6px] leading-[11px]">
          <li className="flex items-center gap-[3px] whitespace-nowrap">
            <span className="size-[4px] bg-[#bce0fd]" />
            USD - 72%
          </li>
          <li className="flex items-center gap-[3px] whitespace-nowrap">
            <span className="size-[4px] bg-[#2699fb]" />
            BTC - 28%
          </li>
        </ul>
      </div>
      <table className="mt-[6px] w-full table-fixed whitespace-nowrap text-left text-[6px] leading-[11px]">
        <thead>
          <tr>
            <th className="w-[27px] p-0" />
            <th className="w-[32px] p-0 font-normal">Amount</th>
            <th className="w-[39px] p-0 font-normal">Rate</th>
            <th className="p-0 font-normal">USD Equivalent</th>
          </tr>
        </thead>
        <tbody>
          <tr>
            <td className="p-0">
              <span className="flex items-center gap-[3px]">
                <Coin className="size-[8px]" />
                USD
              </span>
            </td>
            <td className="p-0">5,790.00</td>
            <td />
            <td />
          </tr>
          <tr>
            <td className="p-0">
              <span className="flex items-center gap-[3px]">
                <FaBitcoin className="size-[8px] text-[#0480ee]" />
                BTC
              </span>
            </td>
            <td className="p-0">0.0202</td>
            <td className="p-0">9,371.0799</td>
            <td className="p-0">209.35</td>
          </tr>
        </tbody>
      </table>
    </Body>
  </Card>
);

const TRANSACTIONS = [
  ["USD", "2020/08/25 04:03:00", "-20"],
  ["Bitcoin", "2020/08/25 04:03:00", "0.0016814"],
  ["USD", "2020/08/25 02:40:00", "-20"],
  ["Bitcoin", "2020/08/25 02:40:00", "0.0016757"],
  ["USD", "2020/08/25 02:38:00", "-50"],
  ["Bitcoin", "2020/08/25 02:38:00", "0.0041878"],
  ["USD", "2020/08/24 02:40:00", "-20"],
  ["Bitcoin", "2020/08/24 02:40:00", "0.0016828"],
];

const Pair = ({ a, b }: { a: string; b: string }) => (
  <span className="flex gap-[4px]">
    <TinyButton className="w-[35px]">{a}</TinyButton>
    <TinyButton className="w-[35px]">{b}</TinyButton>
  </span>
);

const fundsTable = "w-full table-fixed whitespace-nowrap text-left font-['DejaVu_Sans',sans-serif] text-[5px] leading-[7px]";

const Funds = () => (
  <Card className="min-h-[364px]">
    <Header title="My Funds" />
    <Body className="px-[3px]">
      <H className="mt-[15px]">My Binfinity Funds</H>
      <table className={`mt-[2px] ${fundsTable}`}>
        <thead>
          <tr className="h-[9px]">
            <th className="w-[46px] p-0 pl-[5px] font-normal">Name</th>
            <th className="w-[34px] p-0 font-normal">Total Balance</th>
            <th className="p-0 pl-[28px] font-normal">Available</th>
          </tr>
        </thead>
        <tbody>
          <tr className="h-[9px] bg-[#f1f9ff]">
            <td className="p-0 pl-[5px]">Balance</td>
            <td />
            <td />
          </tr>
          <tr className="h-[9px]">
            <td className="p-0 pl-[5px]">USD</td>
            <td className="p-0 pl-[20px]">4,200</td>
            <td rowSpan={2} className="p-0 pt-px align-top font-['Liberation_Sans',sans-serif]">
              <Pair a="Deposit" b="Withdrawal" />
            </td>
          </tr>
          <tr className="h-[9px]">
            <td className="p-0 pl-[5px]">2,700</td>
            <td />
          </tr>
          <tr className="h-[8px] bg-[#f1f9ff]">
            <td colSpan={3} className="p-0" />
          </tr>
          <tr className="h-[10px]">
            <td className="p-0" />
            <td className="p-0" />
            <td className="p-0 pt-px font-['Liberation_Sans',sans-serif]">
              <Pair a="Deposit" b="Withdrawal" />
            </td>
          </tr>
        </tbody>
      </table>
      <H className="mt-[12px]">Transaction History</H>
      <table className={`mt-[2px] ${fundsTable}`}>
        <thead>
          <tr className="h-[10px]">
            <th className="w-[46px] p-0 pl-[5px] font-normal">Name</th>
            <th className="w-[82px] p-0 font-normal">Date</th>
            <th className="p-0 font-normal">Amount</th>
          </tr>
        </thead>
        <tbody>
          {TRANSACTIONS.map(([name, date, amount], i) => (
            <tr key={i} className="border-b border-white bg-[#f1f9ff] odd:h-[9px] even:h-[8px]">
              <td className="p-0 pl-[5px]">{name}</td>
              <td className="p-0">{date}</td>
              <td className="p-0">{amount}</td>
            </tr>
          ))}
        </tbody>
      </table>
      <H className="mt-[12px]">Withdrawals</H>
      <P className="mt-px">There are no withdrawals to show yet</P>
      <H className="mt-[12px]">My External Wallets/Accounts</H>
      <table className={`mt-[3px] ${fundsTable}`}>
        <thead>
          <tr className="h-[9px]">
            <th className="w-[67px] p-0 pl-[5px] font-normal">Account Label</th>
            <th className="w-[13px] p-0 font-normal">Currency</th>
            <th className="p-0" />
          </tr>
        </thead>
        <tbody>
          {["ETH TEST", "ETH"].map((name) => (
            <tr key={name} className="h-[9px] bg-[#f1f9ff]">
              <td className="p-0 pl-[5px]">{name}</td>
              <td />
              <td className="p-0 font-['Liberation_Sans',sans-serif]">
                <Pair a="Edit" b="Delete" />
              </td>
            </tr>
          ))}
        </tbody>
      </table>
      <TinyButton className="mt-[4px] w-[48px]">Add New Account</TinyButton>
      <H className="mt-[13px]">Deposit Payments</H>
      <P className="mt-px">No Deposits have been made yet</P>
    </Body>
  </Card>
);

const SaveCancel = () => (
  <div className="flex gap-[4px]">
    <TinyButton className="w-[48px]">Save</TinyButton>
    <TinyButton className="w-[48px] bg-[#bce0fd] text-[#f1f9ff]">Cancel</TinyButton>
  </div>
);

const CryptoAccount = () => (
  <Card className="min-h-[396px]">
    <Header title="My Funds" />
    <Body>
      <H className="mt-[7px]">My External Wallets/Accounts</H>
      <div className="mt-px grid gap-[4px]">
        <Field label="Account Label" value="0.0829706" />
        <Select label="Currency" value="BTC" />
        <Field label="Wallet Address" value="098724537890234098509872345" />
      </div>
      <P className="mt-[11px]">*Important</P>
      <Para className="mb-[6px] mt-[6px]">{"Please send only to this address. If you send any\nother coin or token to this address, then you may\nlose it."}</Para>
      <SaveCancel />
    </Body>
  </Card>
);

const BankAccount = () => (
  <Card className="min-h-[397px]">
    <Header title="My Funds" />
    <Body>
      <H className="mt-[7px]">My External Wallets/Accounts</H>
      <div className="mt-px grid gap-[6px]">
        <div className="grid gap-[5px]">
          <Field label="Account Label" value="0.0829706" />
          <Select label="Currency" value="USD" />
          <Field label="Bank Name" value="Irish Bank" />
        </div>
        <div className="grid gap-[5px]">
          <Field label="Bank City" value="Cobb" />
          <Field label="Country of Bank" value="Ireland" />
          <Field label="Account Number" value="234515987" />
        </div>
        <div className="grid gap-[5px]">
          <Field label="Beneficiary Name" value="John Doe" />
          <Field label="Sort/Routing Code" value="098029875710" />
          <Field label="BICC/Swift Code" value="123451256" />
        </div>
      </div>
      <P className="mt-[11px]">*Important</P>
      <Para className="mb-[5px] mt-[6px]">
        {"The beneficiary name of the account holder must be\nthe same as in your identification documents.\nShould your account details change please update\nthe registration information before your next\ntransaction."}
      </Para>
      <SaveCancel />
    </Body>
  </Card>
);

const Panel = ({ children, className = "" }: Kids) => <div className={`mx-[6px] rounded-[2px] bg-[#f1f9ff] pl-[10px] pt-[9px] ${className}`}>{children}</div>;

const Settings = () => (
  <Card className="min-h-[390px]">
    <Header small title="SETTINGS" />
    <Panel className="mt-[6px] pb-[12px]">
      <H>Account Info</H>
      <B className="mt-[5px]">Email Address</B>
      <P className="mt-[2px]">lasbund@gmail.com</P>
      <B className="mt-[10px]">Account Number</B>
      <P className="mt-[2px]">78</P>
      <B className="mt-[11px]">KYC Info</B>
      <P className="mt-[2px]">Verified</P>
      <SmallButton className="mt-[2px]">View Info</SmallButton>
    </Panel>
    <Panel className="mt-[7px] pb-[12px]">
      <H>Security</H>
      <B className="mt-[5px]">Two Factor Authentication</B>
      <P className="mt-[2px]">Disabled</P>
      <SmallButton className="mt-[2px]">View Info</SmallButton>
      <B className="mt-[12px]">Change Password</B>
      <SmallButton className="mt-[2px]">View Info</SmallButton>
    </Panel>
    <Panel className="mt-[7px] pb-[14px]">
      <H>Referrals</H>
      <SmallButton className="mt-[2px]">View Info</SmallButton>
    </Panel>
  </Card>
);

const Referrals = () => (
  <Card className="min-h-[408px]">
    <Header title="Referrals" className="mr-[10px]" />
    <Body className="px-[3px]">
      <H className="mt-px">Start now</H>
      <P className="mt-px">Click one or more of the following</P>
      <B className="mt-[11px]">Share the referral link</B>
      <Para className="mt-px">{"This link will lead your friends to the Binfinity\nregistration page with your personal referral code."}</Para>
      <Field className="mr-[13px] mt-[4px]" name="Referral link" value="https://binfinity.io/register/2529110fb47441a8" />
      <TinyButton className="mt-[4px] w-[48px]">Copy</TinyButton>
      <B className="mt-[25px]">Post to social media</B>
      <Para className="mt-px">{"Click any of the buttons below to share your personal\nreferral link on your favorite social network."}</Para>
      <div className="mt-[5px] grid w-[48px] gap-[2px]">
        <TinyButton>
          <FaFacebook className="size-[4px]" />
          Facebook
        </TinyButton>
        <TinyButton>
          <FaTwitter className="size-[4px]" />
          Twitter
        </TinyButton>
        <TinyButton>
          <FaLinkedin className="size-[4px]" />
          LinkedIn
        </TinyButton>
      </div>
      <B className="mt-[26px]">Share the Referral ID</B>
      <Para className="mt-px">{"Your referral ID can be entered directly in the space\nprovided on the account registration page."}</Para>
      <Field className="mr-[13px] mt-[5px]" name="Referral ID" value="2529110fb47441a8" />
      <TinyButton className="mt-[4px] w-[48px]">Copy</TinyButton>
      <H className="mt-[26px]">My Referrals</H>
      <Para className="mt-px">{"Your friends who have registered and competed KYC\nare displayed below."}</Para>
      <div className="mt-[5px] grid grid-cols-[73px_1fr] whitespace-nowrap text-[6px] leading-[8px]">
        <span className="flex items-center gap-[2px]">
          E-mail
          <Chevron />
        </span>
        <span>Date Joined</span>
      </div>
    </Body>
  </Card>
);

const Column = ({ children }: Kids) => <div className="flex min-w-0 flex-col gap-[17px]">{children}</div>;

export default function App() {
  return (
    <main className="grid grid-cols-10 items-start gap-[17px] bg-white px-[17px] pb-[11px] pt-[5px] font-['Liberation_Sans',sans-serif] text-[#2699fb]">
      <Column>
        <SignIn />
        <HomeGrid />
      </Column>
      <Column>
        <Registration />
        <HomeList />
      </Column>
      <Column>
        <Store />
        <Store detailed />
      </Column>
      <Column>
        <Programs />
        <Programs modal />
      </Column>
      <Column>
        <NameStep />
        <WhenStep />
        <HowMuchStep />
        <ConfirmStep />
      </Column>
      <Column>
        <CoinDrop recipient="Select recipient" />
        <CoinDrop recipient="" list />
        <CoinDrop recipient="CryptoLord82" />
        <CoinDrop recipient="" modal />
      </Column>
      <Column>
        <MyQr />
        <ScanQr />
      </Column>
      <Column>
        <Chat />
        <Chat open />
      </Column>
      <Column>
        <Assets />
        <Funds />
        <CryptoAccount />
        <BankAccount />
      </Column>
      <Column>
        <Settings />
        <Referrals />
      </Column>
    </main>
  );
}
